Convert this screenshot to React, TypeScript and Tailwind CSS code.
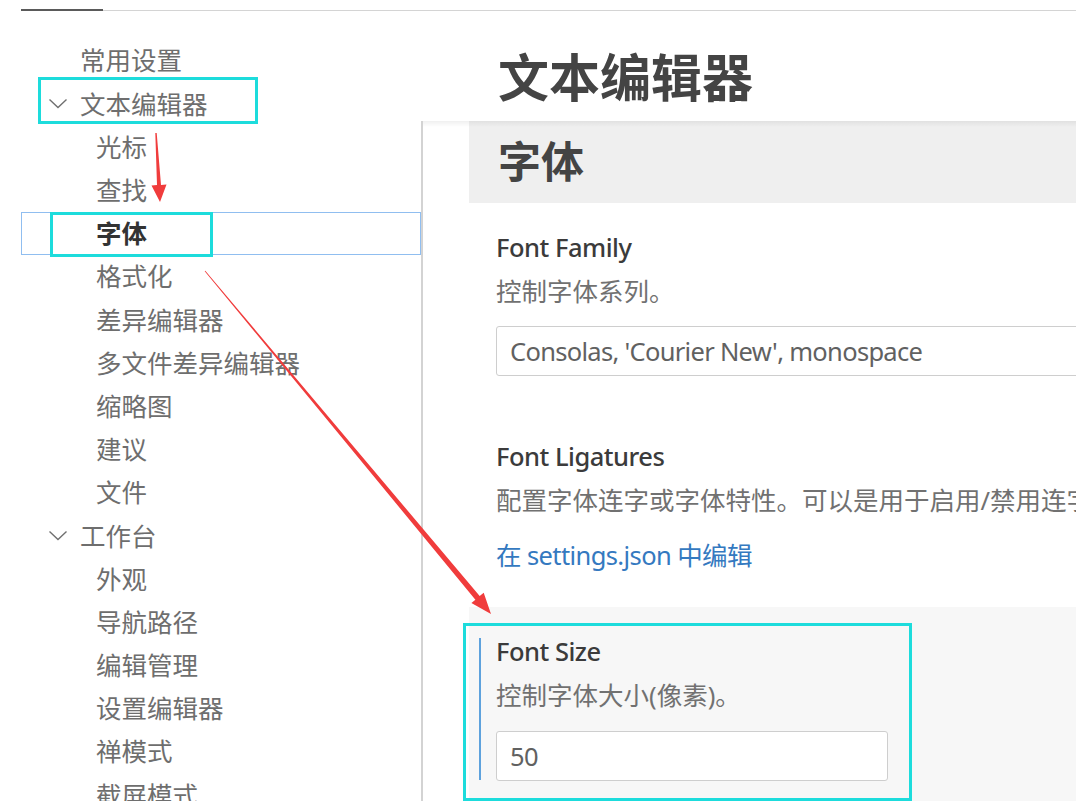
import React from "react"

type TreeNode = { label: string; level: 1 | 2; open?: boolean; active?: boolean }

const tree: TreeNode[] = [
  { label: "常用设置", level: 1 },
  { label: "文本编辑器", level: 1, open: true },
  { label: "光标", level: 2 },
  { label: "查找", level: 2 },
  { label: "字体", level: 2, active: true },
  { label: "格式化", level: 2 },
  { label: "差异编辑器", level: 2 },
  { label: "多文件差异编辑器", level: 2 },
  { label: "缩略图", level: 2 },
  { label: "建议", level: 2 },
  { label: "文件", level: 2 },
  { label: "工作台", level: 1, open: true },
  { label: "外观", level: 2 },
  { label: "导航路径", level: 2 },
  { label: "编辑管理", level: 2 },
  { label: "设置编辑器", level: 2 },
  { label: "禅模式", level: 2 },
  { label: "截屏模式", level: 2 },
]

function Chevron() {
  return (
    <svg width="20" height="11" viewBox="0 0 20 11" fill="none">
      <polyline points="1.5,1.5 10,9.5 18.5,1.5" stroke="#707070" strokeWidth="1.4" />
    </svg>
  )
}

// tapered annotation arrow, like the ones a snipping tool draws
function arrowPoints(sx: number, sy: number, ex: number, ey: number, tail: number, neck: number, headLen: number, headHalf: number) {
  const dx = ex - sx
  const dy = ey - sy
  const len = Math.hypot(dx, dy)
  const ux = dx / len
  const uy = dy / len
  const nx = -uy
  const ny = ux
  const bx = ex - ux * headLen
  const by = ey - uy * headLen
  const pts = [
    [sx + nx * tail, sy + ny * tail],
    [bx + nx * neck, by + ny * neck],
    [bx + nx * headHalf, by + ny * headHalf],
    [ex, ey],
    [bx - nx * headHalf, by - ny * headHalf],
    [bx - nx * neck, by - ny * neck],
    [sx - nx * tail, sy - ny * tail],
  ]
  return pts.map((p) => `${p[0].toFixed(1)},${p[1].toFixed(1)}`).join(" ")
}

function Annotations() {
  return (
    <svg className="absolute inset-0 pointer-events-none" width="1076" height="801" viewBox="0 0 1076 801">
      <rect x="39.5" y="78.5" width="217" height="44" fill="none" stroke="#1ddcdc" strokeWidth="3" />
      <rect x="51.5" y="213.5" width="160" height="42" fill="none" stroke="#1ddcdc" strokeWidth="3" />
      <rect x="464.5" y="624.5" width="446" height="175" fill="none" stroke="#1ddcdc" strokeWidth="3" />
      <polygon points={arrowPoints(156, 133, 160, 202, 0.7, 2, 17, 7.5)} fill="#f03c3c" />
      <polygon points={arrowPoints(205, 271, 491, 614, 0.4, 2.8, 21, 8)} fill="#f03c3c" />
    </svg>
  )
}

function TextInput({ value, className = "" }: { value: string; className?: string }) {
  return (
    <div
      className={`h-[50px] flex items-center pl-[13px] bg-white border border-[#cecece] rounded-[3px] text-[25.5px] tracking-[-0.7px] text-[#616161] whitespace-nowrap ${className}`}
    >
      {value}
    </div>
  )
}

function Label({ children }: { children: React.ReactNode }) {
  return <div className="leading-[44px] text-[25.5px] font-medium tracking-[-0.5px] text-[#3b3b3b]">{children}</div>
}

export default function App() {
  return (
    <div className="relative w-[1076px] h-[801px] overflow-hidden bg-white font-['Noto_Sans','Noto_Sans_CJK_SC',sans-serif]">
      {/* tab strip underline */}
      <div className="flex items-end h-[11px] pl-[21px]">
        <div className="w-[82px] h-[2px] bg-[#5a5a5a]" />
        <div className="flex-1 h-px bg-[#d4d4d4]" />
      </div>

      <div className="flex h-[790px]">
        {/* settings tree */}
        <div className="w-[400px] ml-[21px] pt-[28px] shrink-0">
          {tree.map((node) => (
            <div
              key={node.label}
              className={`flex items-center h-[43.2px] border whitespace-nowrap text-[25.5px] ${
                node.active ? "border-[#90bef0] font-bold text-[#333]" : "border-transparent text-[#6e6e6e]"
              } ${node.level === 1 ? "pl-[26px]" : "pl-[74px]"}`}
            >
              {node.level === 1 && (
                <span className="w-[32px] flex items-center">{node.open && <Chevron />}</span>
              )}
              {node.label}
            </div>
          ))}
        </div>

        {/* settings editor */}
        <div className="flex-1 flex flex-col min-w-0">
          <div className="h-[110px] pt-[40px] pl-[77px] shrink-0">
            <h1 className="leading-[52px] text-[51px] font-bold text-[#444] whitespace-nowrap">文本编辑器</h1>
          </div>

          <div className="relative flex-1 border-l-2 border-[#d3d3d3]">
            <div className="ml-[46px] w-[800px]">
              <div className="h-[82px] flex items-center pl-[29px] bg-[#efefef]">
                <h2 className="text-[43px] font-bold text-[#444]">字体</h2>
              </div>

              <div className="pt-[22px] pb-[36px] pl-[27px] pr-[150px]">
                <Label>Font Family</Label>
                <div className="leading-[44px] text-[25.5px] text-[#717171]">控制字体系列。</div>
                <TextInput className="mt-[13px] w-full" value="Consolas, 'Courier New', monospace" />
              </div>

              <div className="pt-[22px] pb-[30px] pl-[27px]">
                <Label>Font Ligatures</Label>
                <div className="leading-[44px] text-[25.5px] text-[#717171] whitespace-nowrap">
                  配置字体连字或字体特性。可以是用于启用/禁用连字的布尔值，或用于设置 CSS &quot;font-feature-settings&quot; 属性值的字符串。
                </div>
                <div className="mt-[11px] leading-[44px] text-[25.5px] tracking-[-0.6px] text-[#3479c0]">在 settings.json 中编辑</div>
              </div>

              <div className="relative h-[200px] pt-[22px] pl-[27px] bg-[#f7f7f7]">
                <div className="absolute left-[10px] top-[31px] w-[2px] h-[142px] bg-[#5ea2dd]" />
                <Label>Font Size</Label>
                <div className="leading-[44px] text-[25.5px] text-[#717171]">控制字体大小(像素)。</div>
                <TextInput className="mt-[14px] w-[392px]" value="50" />
              </div>
            </div>

            <div className="absolute top-0 left-0 right-0 h-[6px] bg-gradient-to-b from-black/[0.06] to-transparent" />
          </div>
        </div>
      </div>

      <Annotations />
    </div>
  )
}
